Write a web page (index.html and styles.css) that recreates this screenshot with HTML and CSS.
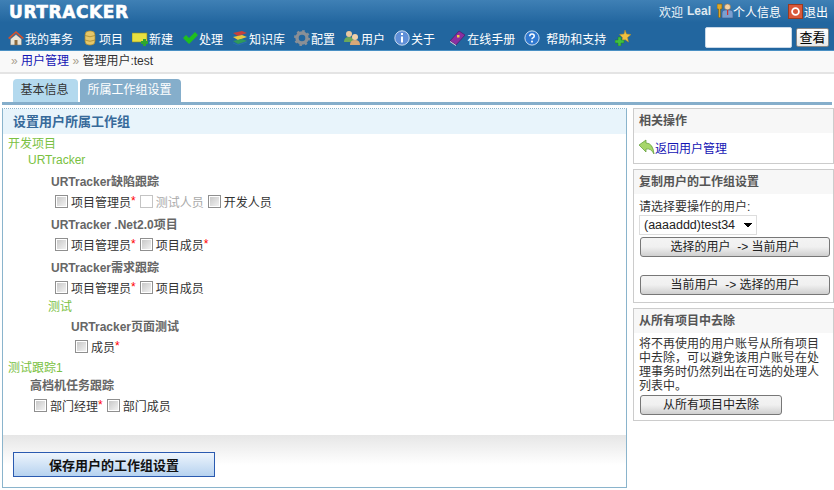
FILE: index.html
```html
<!DOCTYPE html>
<html lang="zh-CN">
<head>
    <meta charset="UTF-8">
    <title>URTracker - 管理用户</title>
    <link rel="stylesheet" href="styles.css">
</head>
<body>
    <div class="header">
        <div class="header-top">
            <div class="logo">URTRACKER</div>
            <div class="user-links">
                <span>欢迎</span> <b class="user-name">Leal</b>
                <svg class="icon-user" viewBox="0 0 16 16"><path d="M0 1h5v5H3.500v8L2.500 15l-1-1V6H0z" fill="#e0a92a" stroke="#7a5a10" stroke-width=".6"/><circle cx="10.500" cy="4" r="3" fill="#f3d3a8" stroke="#a07040" stroke-width=".6"/><path d="M5 15v-5q0-3 3-3h5q3 0 3 3v5z" fill="#7a9fd0" stroke="#3a5a90" stroke-width=".6"/><rect x="10" y="7" width="1.200" height="5" fill="#d03030"/></svg><a href="#">个人信息</a>
                <svg class="icon-user" viewBox="0 0 16 16"><rect x=".5" y="1.500" width="14" height="14" fill="#d9583a" stroke="#9a3a20"/><circle cx="7.500" cy="8.500" r="3.400" fill="none" stroke="#fff" stroke-width="1.800"/></svg><a href="#">退出</a>
            </div>
        </div>
        <div class="nav-row">
            <div class="nav">
                <a href="#"><svg viewBox="0 0 16 16"><path d="M0 8l8-7 8 7-1.500 1L8 3 1.500 9z" fill="#d8502a"/><path d="M2.500 9L8 4.500 13.500 9v6h-11z" fill="#e8e4d8" stroke="#777" stroke-width=".5"/><rect x="6.500" y="10" width="3" height="5" fill="#8a6a40"/></svg>我的事务</a>
                <a href="#"><svg viewBox="0 0 16 16"><rect x="3" y="1" width="10" height="14" rx="4" fill="#e5c76a" stroke="#a88a30" stroke-width=".7"/><path d="M3 5.500q5 2.500 10 0M3 10q5 2.500 10 0" fill="none" stroke="#a88a30" stroke-width=".8"/></svg>项目</a>
                <a href="#"><svg viewBox="0 0 16 16"><rect x="0" y="3" width="15" height="9" fill="#e8e040" stroke="#8a8a20" stroke-width=".6"/><path d="M11 9h3v2h2v3h-2v2h-3v-2H9v-3h2z" fill="#2fa52f"/></svg>新建</a>
                <a href="#"><svg viewBox="0 0 16 16"><path d="M1 8l3-3 3 3 6-6 3 3-9 9z" fill="#1fc01f"/></svg>处理</a>
                <a href="#"><svg viewBox="0 0 16 16"><path d="M1 3l9-2 5 2-9 3z" fill="#c8403a"/><path d="M1 7l9-2 5 2-9 3z" fill="#e8c840"/><path d="M1 11l9-2 5 2-9 3z" fill="#2f9a5a"/><path d="M1 13l5 2 9-3" fill="none" stroke="#2a6fb0"/></svg>知识库</a>
                <a href="#"><svg viewBox="0 0 16 16"><circle cx="8" cy="8" r="5" fill="none" stroke="#8a8f96" stroke-width="3.400"/><circle cx="8" cy="8" r="7" fill="none" stroke="#8a8f96" stroke-width="2" stroke-dasharray="2.500 3"/></svg>配置</a>
                <a href="#"><svg viewBox="0 0 16 16"><circle cx="5" cy="4" r="3" fill="#e8c8a0"/><path d="M0 12q0-5 5-5t5 5z" fill="#6aa85a"/><circle cx="11" cy="7" r="3" fill="#f0d0a8"/><path d="M6 15q0-5 5-5t5 5z" fill="#d8a878"/></svg>用户</a>
                <a href="#"><svg viewBox="0 0 16 16"><circle cx="8" cy="8" r="7.200" fill="#5f8fd8" stroke="#d8e4f4" stroke-width=".9"/><rect x="7" y="3" width="2" height="2" fill="#fff"/><rect x="7" y="6.500" width="2" height="6" fill="#fff"/></svg>关于</a>
                <a href="#" class="nav-gap"><svg viewBox="0 0 16 16"><path d="M0 11l9-10 6 4-9 10z" fill="#8a2fa0" stroke="#4a1560" stroke-width=".6"/><path d="M0 11l6 4v1L0 12z" fill="#ddd"/><rect x="7" y="5" width="2.500" height="2.500" fill="#f0d040"/></svg>在线手册</a>
                <a href="#"><svg viewBox="0 0 18 18"><circle cx="9" cy="9" r="8" fill="#2f78d0" stroke="#e0ecf8"/><path d="M6.500 7q0-2.500 2.500-2.500t2.500 2.200q0 1.300-1.500 2.100-1 .5-1 1.700" fill="none" stroke="#fff" stroke-width="1.700"/><rect x="8" y="12" width="2" height="2" fill="#fff"/></svg><span class="nav-text-gap">帮助和支持</span></a>
                <a href="#" class="nav-star"><svg viewBox="0 0 16 16"><path d="M10 0l1.500 4 4.500.5-3.500 3 1 4.500-3.500-2.500-3.500 2.500 1-4.500-3-3 4.500-.5z" fill="#f0c040" stroke="#b08a20" stroke-width=".5"/><path d="M3 7h3v3h3v3H6v3H3v-3H0v-3h3z" fill="#40c040" stroke="#208020" stroke-width=".5"/></svg></a>
            </div>
            <form class="search">
                <input type="text" class="search-input">
                <button type="button" class="search-btn">查看</button>
            </form>
        </div>
    </div>

    <div class="crumbs">
        <span class="sep">»</span> <a href="#">用户管理</a> <span class="sep">»</span> 管理用户:test
    </div>

    <div class="tabs">
        <a href="#" class="tab">基本信息</a>
        <a href="#" class="tab tab-active">所属工作组设置</a>
    </div>

    <div class="content">
        <div class="main-panel">
            <h2 class="main-title">设置用户所属工作组</h2>
            <div class="tree">
                <div class="group">开发项目</div>
                <div class="group lvl1">URTracker</div>

                <div class="project lvl2">URTracker缺陷跟踪</div>
                <div class="roles lvl2">
                    <label><input type="checkbox">项目管理员<i>*</i></label>
                    <label class="disabled"><input type="checkbox" disabled>测试人员</label>
                    <label><input type="checkbox">开发人员</label>
                </div>

                <div class="project lvl2">URTracker .Net2.0项目</div>
                <div class="roles lvl2">
                    <label><input type="checkbox">项目管理员<i>*</i></label>
                    <label><input type="checkbox">项目成员<i>*</i></label>
                </div>

                <div class="project lvl2">URTracker需求跟踪</div>
                <div class="roles lvl2">
                    <label><input type="checkbox">项目管理员<i>*</i></label>
                    <label><input type="checkbox">项目成员</label>
                </div>

                <div class="group sub lvl15">测试</div>
                <div class="project sub2 lvl3">URTracker页面测试</div>
                <div class="roles lvl3">
                    <label><input type="checkbox">成员<i>*</i></label>
                </div>

                <div class="group top2">测试跟踪1</div>
                <div class="project sub3 lvl1b">高档机任务跟踪</div>
                <div class="roles lvl1b">
                    <label><input type="checkbox">部门经理<i>*</i></label>
                    <label><input type="checkbox">部门成员</label>
                </div>
            </div>
            <div class="main-foot">
                <button type="button" class="save-btn">保存用户的工作组设置</button>
            </div>
        </div>

        <div class="side">
            <div class="side-box">
                <h3>相关操作</h3>
                <div class="back-link">
                    <svg viewBox="0 0 16 16"><path d="M0 6l7-5v3q7 0 8 11-3-6-8-5v3z" fill="#a6d66a" stroke="#5a9a30" stroke-width=".7"/></svg><a href="#">返回用户管理</a>
                </div>
            </div>
            <div class="side-box">
                <h3>复制用户的工作组设置</h3>
                <div class="side-body copy-body">
                    <div>请选择要操作的用户:</div>
                    <select class="user-select"><option>(aaaaddd)test34</option></select>
                    <button type="button" class="side-btn">选择的用户 &nbsp;-&gt; 当前用户</button>
                    <button type="button" class="side-btn btn-second">当前用户 &nbsp;-&gt; 选择的用户</button>
                </div>
            </div>
            <div class="side-box">
                <h3>从所有项目中去除</h3>
                <div class="side-body">
                    <p>将不再使用的用户账号从所有项目中去除，可以避免该用户账号在处理事务时仍然列出在可选的处理人列表中。</p>
                    <button type="button" class="side-btn btn-short">从所有项目中去除</button>
                </div>
            </div>
        </div>
    </div>
</body>
</html>
```

FILE: styles.css
```css
* {
    box-sizing: border-box;
}
body {
    margin: 0;
    font-family: "Liberation Sans", "Noto Sans CJK SC", sans-serif;
    font-size: 12px;
    color: #333;
    background: #fff;
    height: 490px;
    overflow: hidden;
}
svg {
    width: 16px;
    height: 16px;
    flex: none;
}
.header {
    height: 51px;
    background: linear-gradient(#3f80b5 0%, #22669f 45%, #22669f 100%);
    border-bottom: 1px solid #4a90c4;
    color: #fff;
}
.header a {
    color: #fff;
    text-decoration: none;
}
.header-top {
    display: flex;
    justify-content: space-between;
    height: 25px;
    padding: 3px 6px 0 9px;
}
.logo {
    font-family: "DejaVu Sans", sans-serif;
    font-weight: bold;
    font-size: 17px;
    line-height: 19px;
    letter-spacing: .6px;
    color: #fff;
    -webkit-text-stroke: .6px #fff;
}
.user-links {
    display: flex;
    align-items: center;
    height: 16px;
    color: #eaf2f8;
}
.user-name {
    margin: 0 5px 0 4px;
    color: #dfe8f0;
}
.icon-user {
    margin-left: 1px;
}
.user-links a + .icon-user {
    margin-left: 7px;
}
.nav-row {
    display: flex;
    justify-content: space-between;
    height: 25px;
    padding: 0 5px 0 9px;
}
.nav {
    display: flex;
    align-items: center;
    height: 22px;
    margin-top: 2px;
}
.nav a {
    display: flex;
    align-items: center;
    margin-right: 10px;
}
.nav svg {
    margin: 0 1px 0 -1px;
}
.nav .nav-gap {
    margin-left: 6px;
}
.nav-text-gap {
    margin-left: 5px;
}
.nav-star {
    margin-left: 0;
}
.search {
    display: flex;
    align-items: flex-start;
    margin: 2px 0 0;
}
.search-input {
    width: 87px;
    height: 21px;
    border: 1px solid #c8d8e8;
    border-radius: 2px;
    background: #fff;
    margin-right: 4px;
}
.search-btn {
    width: 33px;
    height: 19px;
    margin-top: 1px;
    padding: 0;
    border: 1px solid #888;
    border-radius: 2px;
    background: linear-gradient(#fff, #e8e8e8);
    font: inherit;
    font-size: 13px;
    line-height: 15px;
    color: #000;
}
.crumbs {
    height: 23px;
    line-height: 20px;
    padding-left: 11px;
    background: #f9f9f9;
    border-bottom: 2px solid #e4e4e4;
    color: #333;
}
.crumbs a {
    color: #1414b4;
    text-decoration: none;
}
.crumbs .sep {
    color: #a8a090;
}
.tabs {
    display: flex;
    gap: 2px;
    width: 830px;
    height: 31px;
    margin-left: 2px;
    padding: 5px 0 0 11px;
    border-bottom: 3px solid #85aecb;
}
.tab {
    width: 65px;
    height: 23px;
    line-height: 23px;
    padding-right: 2px;
    text-align: center;
    background: #b3d9ee;
    border-radius: 4px 4px 0 0;
    color: #333;
    text-decoration: none;
}
.tab-active {
    width: 101px;
    background: #85aecb;
    color: #fff;
}
.content {
    display: flex;
    gap: 6px;
    padding: 3px 0 0 2px;
}
.main-panel {
    display: flex;
    flex-direction: column;
    width: 625px;
    height: 380px;
    border: 1px solid #8ab4cc;
    border-top: 1px dotted #8ab4cc;
}
.main-title {
    margin: 0;
    height: 25px;
    line-height: 25px;
    padding-left: 10px;
    font-size: 13px;
    font-weight: bold;
    color: #376a9a;
    background: #e8f4fb;
}
.tree {
    flex: 1;
    padding: 2px 0 0 5px;
}
.group {
    line-height: 16px;
    color: #7ac142;
}
.lvl1 {
    margin-left: 20px;
}
.lvl15 {
    margin-left: 40px;
}
.lvl2 {
    margin-left: 43px;
}
.lvl3 {
    margin-left: 63px;
}
.lvl1b {
    margin-left: 22px;
}
.project {
    margin-top: 5px;
    line-height: 18px;
    font-weight: bold;
    color: #666;
}
.roles {
    display: flex;
    gap: 4px;
    height: 20px;
    padding-left: 4px;
    align-items: center;
}
.roles label {
    display: flex;
    align-items: center;
}
.roles input {
    appearance: none;
    width: 13px;
    height: 13px;
    margin: 0 3px 0 0;
    border: 1px solid #8f8f8f;
    box-shadow: inset 0 0 0 1px #fff;
    background: linear-gradient(135deg, #c4c4c4, #f6f6f6);
}
.roles input:disabled {
    border-color: #c4c4c4;
    background: #fff;
}
.roles i {
    color: #f00;
    font-style: normal;
}
.disabled {
    color: #aaa;
}
.sub {
    margin-top: 2px;
}
.sub2 {
    margin-top: 3px;
}
.top2 {
    margin-top: 4px;
}
.sub3 {
    margin-top: 1px;
}
.main-foot {
    height: 52px;
    padding: 17px 0 0 10px;
    background: linear-gradient(#e6e6e6, #fff 30px);
}
.save-btn {
    width: 202px;
    height: 25px;
    padding: 0;
    border: 1px solid #2a5ab0;
    background: linear-gradient(#eef5fc, #b6d2f0);
    font: inherit;
    font-size: 13px;
    font-weight: bold;
    color: #111;
}
.side {
    width: 201px;
}
.side-box {
    border: 1px solid #ccc;
    margin-bottom: 5px;
}
.side-box h3 {
    margin: 0;
    height: 24px;
    line-height: 24px;
    padding-left: 5px;
    font-size: 12px;
    font-weight: bold;
    color: #555;
    background: #f7f7f7;
}
.side-body {
    padding: 4px 5px 5px;
    line-height: 14px;
}
.copy-body {
    padding: 6px 5px 7px;
}
.side-body p {
    margin: 0;
    line-height: 14px;
}
.back-link {
    display: flex;
    align-items: center;
    height: 30px;
    padding: 0 5px 2px;
}
.back-link a {
    color: #1414b4;
    text-decoration: none;
}
.user-select {
    appearance: none;
    display: block;
    width: 118px;
    height: 20px;
    margin-top: 1px;
    padding: 0 0 0 4px;
    font: inherit;
    font-size: 12.500px;
    border: 1px solid #ddd;
    background:
        linear-gradient(45deg, transparent 50%, #000 50%) 104px 7px / 4px 4px no-repeat,
        linear-gradient(-45deg, transparent 50%, #000 50%) 108px 7px / 4px 4px no-repeat,
        #fff;
    color: #222;
}
.side-btn {
    display: block;
    width: 190px;
    height: 20px;
    margin: 2px 0 0 1px;
    padding: 0;
    border: 1px solid #777;
    border-radius: 3px;
    background: linear-gradient(#f4f4f4, #f0f0f0 50%, #cfcfcf);
    font: inherit;
    color: #222;
}
.btn-second {
    margin-top: 18px;
}
.btn-short {
    width: 142px;
}
```
